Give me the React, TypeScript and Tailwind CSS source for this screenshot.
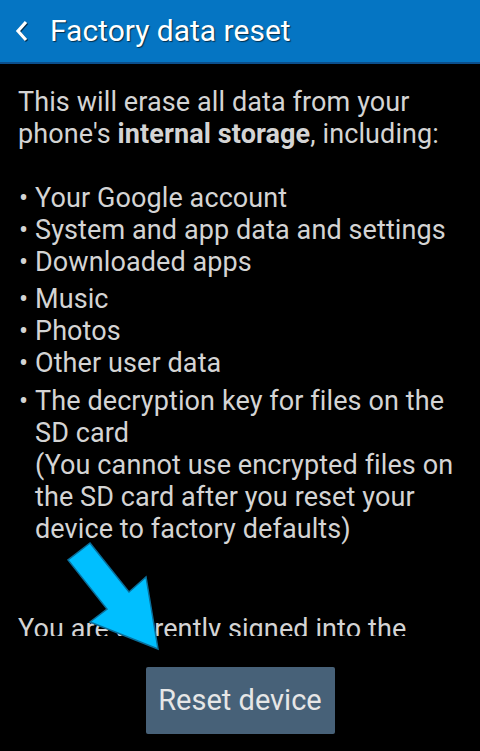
const groups = [
  ["Your Google account", "System and app data and settings", "Downloaded apps"],
  ["Music", "Photos", "Other user data"],
];

function Bullet({ children }: { children: React.ReactNode }) {
  return (
    <li className="flex">
      <span className="w-[17px] flex-none pl-[1px]">•</span>
      <span>{children}</span>
    </li>
  );
}

export default function App() {
  return (
    <main
      className="relative flex h-[751px] w-[480px] flex-col overflow-hidden bg-black"
      style={{ fontFamily: "Roboto, 'Noto Sans', sans-serif" }}
    >
      <header className="flex h-[64px] flex-none items-center border-b-2 border-[#0b4f8c] bg-[#0575c3] pl-[15px]">
        <svg width="14" height="22" viewBox="0 0 14 22" className="drop-shadow-[1px_1px_0_rgba(0,0,0,0.6)]">
          <path d="M11 2 L3 11 L11 20" fill="none" stroke="white" strokeWidth="3.2" strokeLinejoin="miter" />
        </svg>
        <h1 className="ml-[21px] text-[30px] leading-none text-white [text-shadow:1px_1px_1px_rgba(0,0,0,0.6)]">
          Factory data reset
        </h1>
      </header>

      <div className="h-[572px] flex-none overflow-hidden pl-[18px] pr-[12px] pt-[22px] text-[27px] leading-[32px] tracking-[0.1px] text-[#d4d4d4]">
        <p>
          This will erase all data from your phone's <b className="font-bold">internal storage</b>, including:
        </p>
        <div className="h-[32px]" />
        {groups.map((g, i) => (
          <ul key={i} className={i > 0 ? "mt-[5px]" : ""}>
            {g.map((t) => (
              <Bullet key={t}>{t}</Bullet>
            ))}
          </ul>
        ))}
        <ul className="mt-[6px]">
          <Bullet>
            The decryption key for files on the SD card
            <br />
            (You cannot use encrypted files on the SD card after you reset your device to factory defaults)
          </Bullet>
        </ul>
        <p className="mt-[68px]">You are currently signed into the following accounts:</p>
      </div>

      <div className="flex flex-1 items-start justify-center pt-[31px]">
        <button className="h-[67px] w-[189px] rounded-[2px] bg-[#476178] text-[29px] text-[#e6e6e6]">
          Reset device
        </button>
      </div>

      <svg className="absolute left-0 top-0" width="480" height="751" viewBox="0 0 480 751">
        <polygon
          points="90,543 129,592 146,577 158,649 90,622 107,609 68,560"
          fill="#00bfff"
          stroke="#0a6e9a"
          strokeWidth="1.5"
          strokeLinejoin="miter"
        />
      </svg>
    </main>
  );
}
